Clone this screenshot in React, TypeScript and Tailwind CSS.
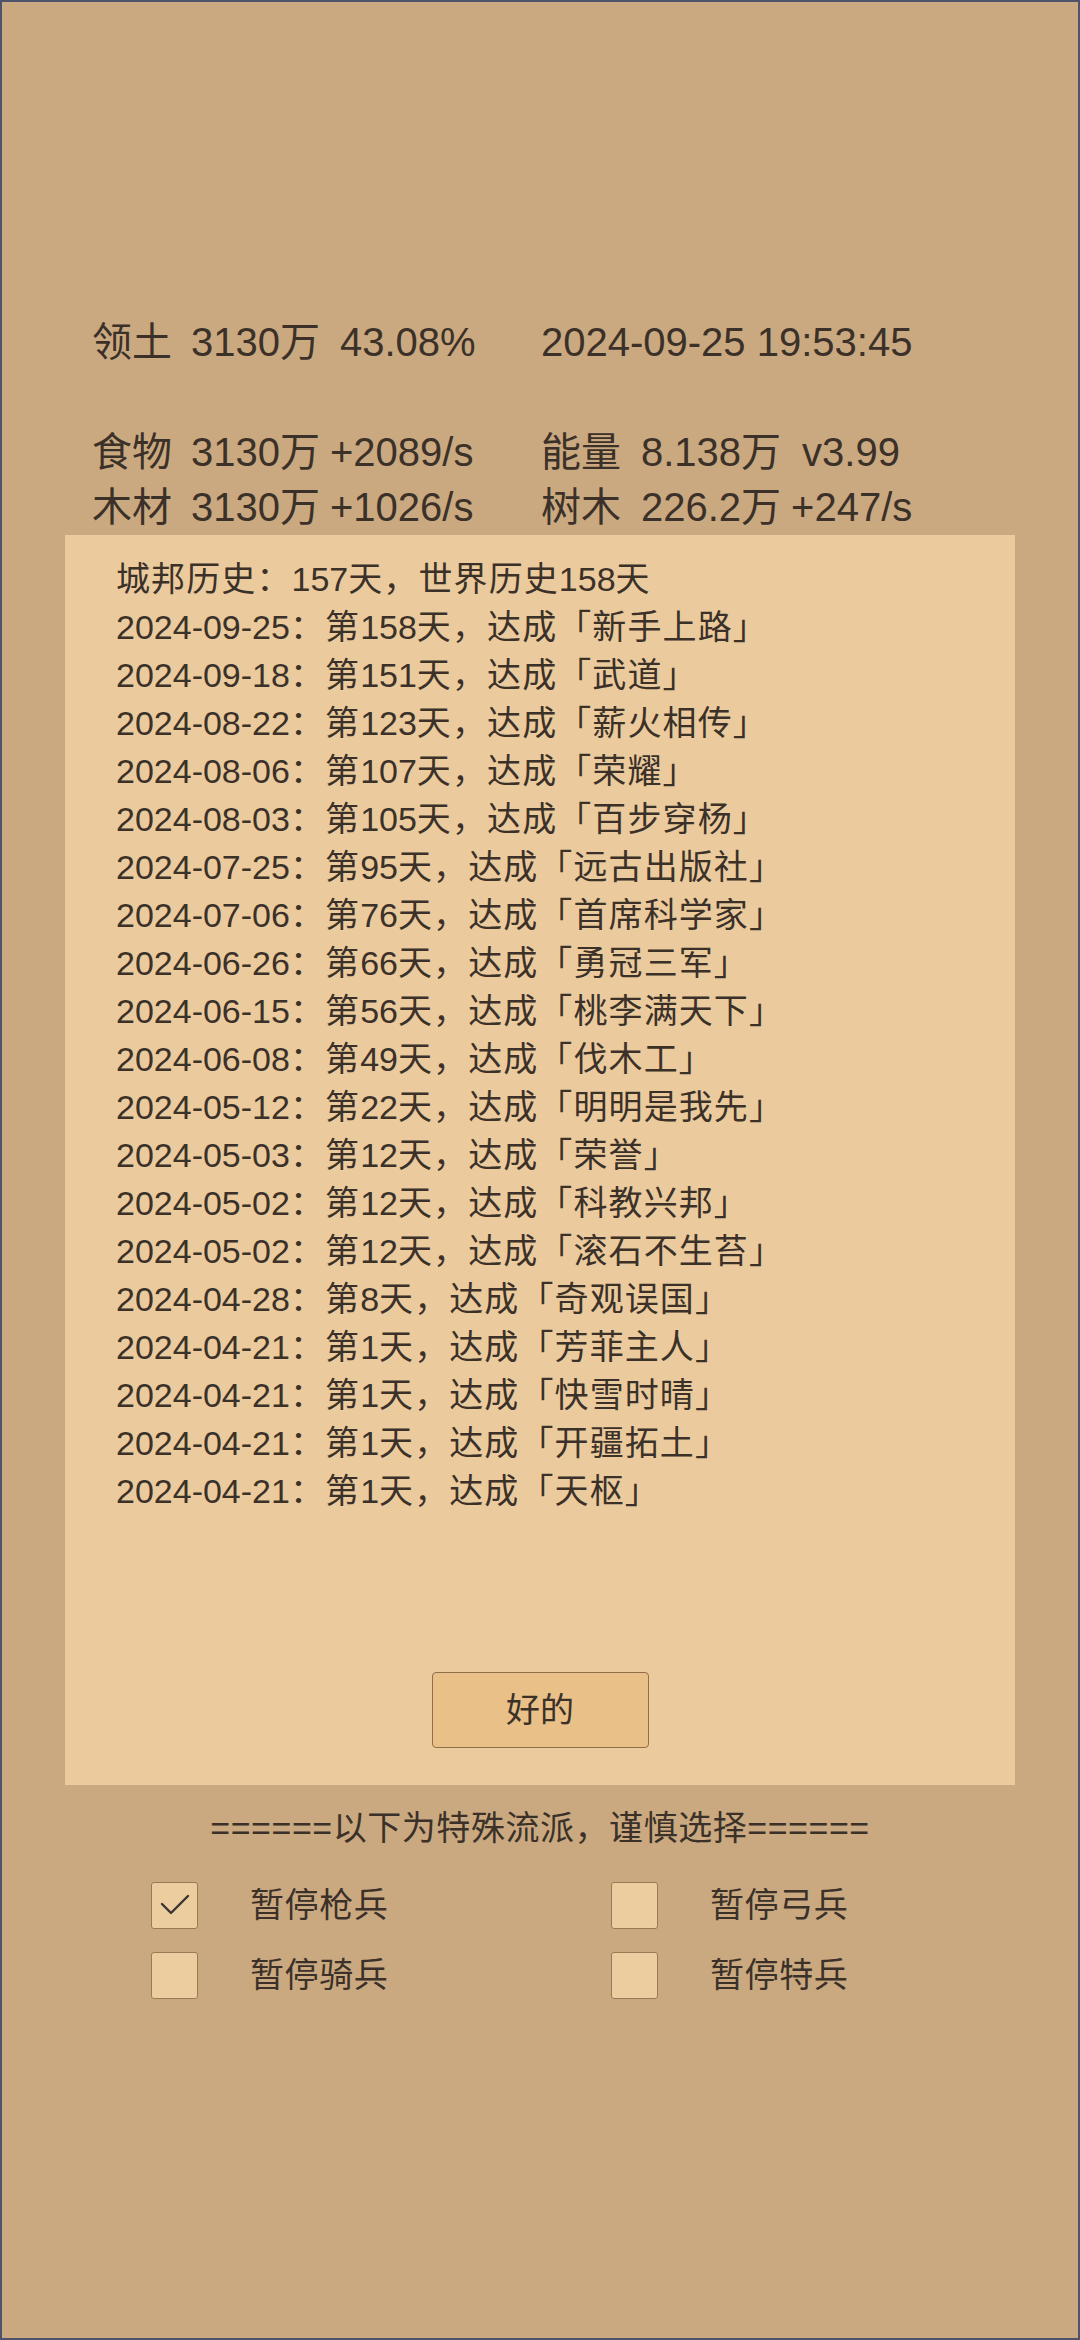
const entries: [string, string, string][] = [
  ["2024-09-25", "158", "新手上路"],
  ["2024-09-18", "151", "武道"],
  ["2024-08-22", "123", "薪火相传"],
  ["2024-08-06", "107", "荣耀"],
  ["2024-08-03", "105", "百步穿杨"],
  ["2024-07-25", "95", "远古出版社"],
  ["2024-07-06", "76", "首席科学家"],
  ["2024-06-26", "66", "勇冠三军"],
  ["2024-06-15", "56", "桃李满天下"],
  ["2024-06-08", "49", "伐木工"],
  ["2024-05-12", "22", "明明是我先"],
  ["2024-05-03", "12", "荣誉"],
  ["2024-05-02", "12", "科教兴邦"],
  ["2024-05-02", "12", "滚石不生苔"],
  ["2024-04-28", "8", "奇观误国"],
  ["2024-04-21", "1", "芳菲主人"],
  ["2024-04-21", "1", "快雪时晴"],
  ["2024-04-21", "1", "开疆拓土"],
  ["2024-04-21", "1", "天枢"],
];

function Box({ checked }: { checked?: boolean }) {
  return (
    <div className="w-[47px] h-[47px] shrink-0 border border-[#9a7a55] rounded-[3px] bg-[#eccd9f] flex items-center justify-center">
      {checked && (
        <svg width="30" height="24" viewBox="0 0 30 24" fill="none">
          <path d="M2 11 L11 20 L28 3" stroke="#3a3530" strokeWidth="2.4" strokeLinecap="round" strokeLinejoin="round" />
        </svg>
      )}
    </div>
  );
}

function Option({ label, checked }: { label: string; checked?: boolean }) {
  return (
    <div className="h-[70px] flex items-center">
      <Box checked={checked} />
      <span className="ml-[52px] text-[34px] leading-[48px] tracking-[0.6px]">{label}</span>
    </div>
  );
}

export default function App() {
  return (
    <div className="w-[1080px] h-[2340px] border-2 border-[#4f526b] bg-[#caa980] text-[#3b3129] font-['Liberation_Sans','Noto_Sans_CJK_SC',sans-serif]">
      <div className="pt-[313px] pl-[90px] text-[40px] leading-[55px] whitespace-nowrap">
        <div className="flex">
          <div className="w-[449px]">
            <span className="inline-block w-[99px]">领土</span>
            <span>3130万</span>
            <span className="ml-[20px]">43.08%</span>
          </div>
          <div>2024-09-25 19:53:45</div>
        </div>
        <div className="h-[55px]" />
        <div className="flex">
          <div className="w-[449px]">
            <span className="inline-block w-[99px]">食物</span>
            <span>3130万</span>
            <span className="ml-[10px]">+2089/s</span>
          </div>
          <div>
            <span className="inline-block w-[100px]">能量</span>
            <span>8.138万</span>
            <span className="ml-[21px]">v3.99</span>
          </div>
        </div>
        <div className="flex">
          <div className="w-[449px]">
            <span className="inline-block w-[99px]">木材</span>
            <span>3130万</span>
            <span className="ml-[10px]">+1026/s</span>
          </div>
          <div>
            <span className="inline-block w-[100px]">树木</span>
            <span>226.2万</span>
            <span className="ml-[10px]">+247/s</span>
          </div>
        </div>
      </div>

      <div className="mx-auto w-[950px] h-[1250px] bg-[#ebcb9d] flex flex-col pt-[20px]">
        <div className="pl-[51px] text-[34px] leading-[48px] whitespace-nowrap">
          <div>
            <span className="tracking-[1.1px]">城邦历史：</span>157<span className="tracking-[1.1px]">天，世界历史</span>158<span className="tracking-[1.1px]">天</span>
          </div>
          {entries.map(([d, n, t], i) => (
            <div key={i}>
              {d}
              <span className="tracking-[1.1px]">：第</span>
              {n}
              <span className="tracking-[1.1px]">天，达成「{t}」</span>
            </div>
          ))}
        </div>
        <button className="mt-auto mb-[37px] self-center w-[217px] h-[76px] border border-[#8f6e48] rounded-[4px] bg-[#e9c088] text-[34px] text-[#3b3129]">
          好的
        </button>
      </div>

      <div className="mt-[19px] text-center text-[34px] leading-[48px] tracking-[0.55px]">======以下为特殊流派，谨慎选择======</div>

      <div className="mt-[18px] pl-[149px] grid grid-cols-[460px_460px]">
        <Option label="暂停枪兵" checked />
        <Option label="暂停弓兵" />
        <Option label="暂停骑兵" />
        <Option label="暂停特兵" />
      </div>
    </div>
  );
}
